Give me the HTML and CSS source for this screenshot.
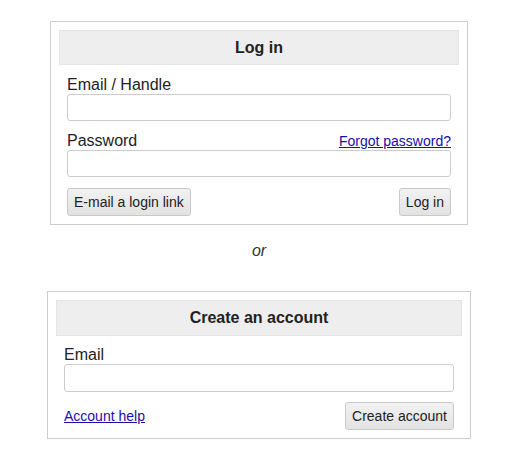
FILE: index.html
```html
<!DOCTYPE html>
<html lang="en">
    <head>
        <meta charset="UTF-8">
        <title>Log in</title>
        <link rel="stylesheet" href="styles.css">
    </head>
    <body>
        <div class="page">
            <form class="panel panel-login">
                <h2 class="panel-title">Log in</h2>
                <div class="panel-body">
                    <div class="field">
                        <label for="handle">Email / Handle</label>
                        <input id="handle" type="text" name="handle">
                    </div>
                    <div class="field">
                        <div class="field-head">
                            <label for="password">Password</label>
                            <a href="#">Forgot password?</a>
                        </div>
                        <input id="password" type="password" name="password">
                    </div>
                    <div class="actions">
                        <button type="button" class="button">E-mail a login link</button>
                        <button type="submit" class="button">Log in</button>
                    </div>
                </div>
            </form>

            <p class="or">or</p>

            <form class="panel panel-signup">
                <h2 class="panel-title">Create an account</h2>
                <div class="panel-body">
                    <div class="field">
                        <label for="email">Email</label>
                        <input id="email" type="text" name="email">
                    </div>
                    <div class="actions">
                        <a href="#">Account help</a>
                        <button type="submit" class="button">Create account</button>
                    </div>
                </div>
            </form>
        </div>
    </body>
</html>
```

FILE: styles.css
```css
* {
    box-sizing: border-box;
}
body {
    margin: 0;
    font-family: "Liberation Sans", Arial, sans-serif;
    color: #222;
    background: #fff;
}
a {
    color: #1a0dab;
    font-size: 14px;
}
.page {
    display: flex;
    flex-direction: column;
    align-items: center;
    padding: 21px 0 0 8px;
}
.panel {
    border: 1px solid #ccc;
    padding: 8px;
    margin: 0;
}
.panel-login {
    width: 418px;
}
.panel-signup {
    width: 424px;
}
.panel-title {
    margin: 0;
    background: #eee;
    border: 1px solid #e4e4e4;
    text-align: center;
    font-size: 16px;
    line-height: 33px;
    color: #222;
}
.panel-signup .panel-title {
    line-height: 34px;
}
.panel-body {
    padding: 0 8px;
}
.field {
    margin-top: 10px;
}
.panel-signup .field {
    margin-top: 9px;
}
.field label {
    display: block;
    font-size: 16px;
    line-height: 19px;
}
.field-head {
    display: flex;
    justify-content: space-between;
    align-items: baseline;
    height: 19px;
    line-height: 19px;
}
.field input {
    display: block;
    width: 100%;
    height: 27px;
    margin: 0;
    border: 1px solid #ccc;
    border-radius: 3px;
    background: #fff;
}
.panel-signup .field input {
    height: 28px;
}
.actions {
    display: flex;
    justify-content: space-between;
    align-items: center;
    margin-top: 11px;
}
.panel-signup .actions {
    margin-top: 10px;
}
.button {
    height: 28px;
    padding: 0 6px;
    font-family: "Liberation Sans", Arial, sans-serif;
    font-size: 14px;
    color: #222;
    background: linear-gradient(#f2f2f2, #e2e2e2);
    border: 1px solid #c8c8c8;
    border-radius: 3px;
}
.or {
    margin: 17px 0 31px;
    font-style: italic;
    font-size: 16px;
    line-height: 18px;
    color: #333;
}
```
